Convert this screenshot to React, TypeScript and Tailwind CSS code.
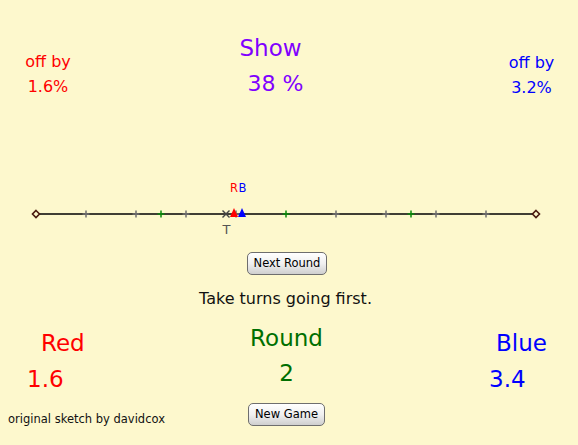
import React from 'react';

const LINE_Y = 39;
const X0 = 36;
const X1 = 536;

const toX = (pct: number) => X0 + ((X1 - X0) * pct) / 100;

const grayTicks = [10, 20, 30, 40, 60, 70, 80, 90];
const greenTicks = [25, 50, 75];

const target = 38;
const redGuess = 39.6;
const blueGuess = 41.2;

const Plus: React.FC<{ x: number; color: string }> = ({ x, color }) => (
  <g stroke={color} strokeWidth={1.5}>
    <line x1={x - 3.5} y1={LINE_Y} x2={x + 3.5} y2={LINE_Y} />
    <line x1={x} y1={LINE_Y - 3.5} x2={x} y2={LINE_Y + 3.5} />
  </g>
);

const Diamond: React.FC<{ x: number }> = ({ x }) => (
  <polygon
    points={`${x},${LINE_Y - 3.5} ${x + 3.5},${LINE_Y} ${x},${LINE_Y + 3.5} ${x - 3.5},${LINE_Y}`}
    fill="#fdf8cd"
    stroke="#4a1a10"
    strokeWidth={1.6}
  />
);

const Marker: React.FC<{ x: number; color: string }> = ({ x, color }) => (
  <polygon points={`${x},${LINE_Y - 6} ${x + 4},${LINE_Y + 3} ${x - 4},${LINE_Y + 3}`} fill={color} />
);

const NumberLine: React.FC = () => {
  const tx = toX(target);
  const rx = toX(redGuess);
  const bx = toX(blueGuess);
  return (
    <svg width={578} height={70} className="block">
      <line x1={X0} y1={LINE_Y} x2={X1} y2={LINE_Y} stroke="#000" strokeWidth={1.5} />
      {grayTicks.map((p) => (
        <Plus key={p} x={toX(p)} color="#6f6f6f" />
      ))}
      {greenTicks.map((p) => (
        <Plus key={p} x={toX(p)} color="#0a8a0a" />
      ))}
      <Diamond x={X0} />
      <Diamond x={X1} />
      <g stroke="#444" strokeWidth={1.4}>
        <line x1={tx - 3.5} y1={LINE_Y - 3.5} x2={tx + 3.5} y2={LINE_Y + 3.5} />
        <line x1={tx - 3.5} y1={LINE_Y + 3.5} x2={tx + 3.5} y2={LINE_Y - 3.5} />
      </g>
      <Marker x={rx} color="#ff0000" />
      <Marker x={bx} color="#0000ff" />
      <text x={rx} y={16.5} fill="#ff0000" fontSize={11.5} textAnchor="middle" fontFamily="DejaVu Sans">
        R
      </text>
      <text x={bx + 0.5} y={16.5} fill="#0000ff" fontSize={11.5} textAnchor="middle" fontFamily="DejaVu Sans">
        B
      </text>
      <text x={tx + 0.5} y={59} fill="#555" fontSize={13} textAnchor="middle" fontFamily="DejaVu Sans">
        T
      </text>
    </svg>
  );
};

const MacButton: React.FC<{ label: string; className?: string }> = ({ label, className }) => (
  <button
    className={`h-[23px] px-[6px] rounded-[5px] border border-[#6e6e6e] bg-linear-to-b from-white via-[#f0f0f0] to-[#cfcfcf] text-[11.5px] leading-none text-black ${className ?? ''}`}
  >
    {label}
  </button>
);

export default function App() {
  return (
    <div className="w-[578px] h-[445px] bg-[#fdf8cd] font-['DejaVu_Sans',sans-serif] flex flex-col overflow-hidden">
      <div className="h-[175px] flex">
        <div className="w-[96px] pt-[49px] text-center text-[16px] leading-[25px] text-[#ff0000]">
          <div>off by</div>
          <div>1.6%</div>
        </div>
        <div className="w-[349px] pt-[30px] text-center text-[23px] leading-[36px] text-[#8000ff]">
          <div>Show</div>
          <div className="pl-[10px] text-[22px]">38 %</div>
        </div>
        <div className="flex-1 pl-[40px] pt-[50px] text-center text-[16px] leading-[25px] text-[#0000ff]">
          <div>off by</div>
          <div>3.2%</div>
        </div>
      </div>

      <NumberLine />

      <div className="mt-[7px] flex justify-center pr-[4px]">
        <MacButton label="Next Round" />
      </div>

      <div className="mt-[14px] pr-[7px] text-center text-[16px] leading-[20px] text-[#111]">
        Take turns going first.
      </div>

      <div className="flex flex-1">
        <div className="w-[200px] flex flex-col text-[#ff0000]">
          <div className="mt-[19px] pl-[41px] text-[23px] leading-[30px]">Red</div>
          <div className="mt-[6px] pl-[27px] text-[23px] leading-[30px]">1.6</div>
          <div className="mt-[18px] pl-[8px] text-[11.5px] leading-[14px] text-[#111]">original sketch by davidcox</div>
        </div>
        <div className="w-[178px] pr-[5px] flex flex-col items-center text-[#006f00]">
          <div className="mt-[14px] text-[23px] leading-[30px]">Round</div>
          <div className="mt-[5px] text-[23px] leading-[30px]">2</div>
          <MacButton label="New Game" className="mt-[15px] px-[5px]" />
        </div>
        <div className="flex-1 flex flex-col text-[#0000ff]">
          <div className="mt-[19px] pl-[118px] text-[23px] leading-[30px]">Blue</div>
          <div className="mt-[6px] pl-[111px] text-[23px] leading-[30px]">3.4</div>
        </div>
      </div>
    </div>
  );
}
